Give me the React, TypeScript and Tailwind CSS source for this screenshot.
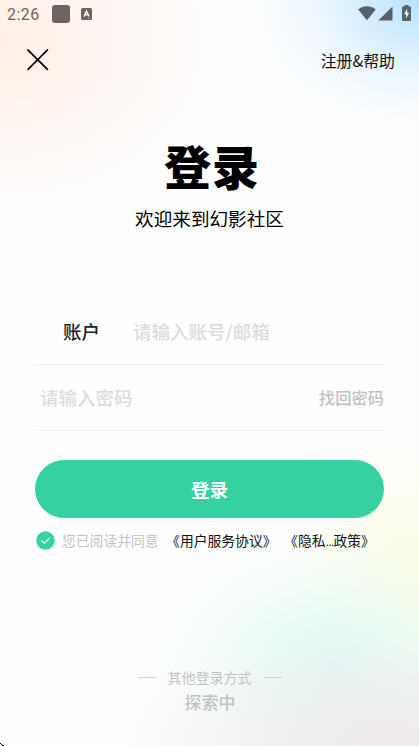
const StatusBar = () => {
  return (
    <div className="flex h-7 items-center justify-between pl-[7px] pr-[8px]">
      <div className="flex items-center text-[#6b6461]">
        <span className="w-[45px] pt-px font-[Roboto] text-[16px] leading-7 tracking-[0.5px]">2:26</span>
        <span className="h-[18px] w-[18px] rounded-[3px] bg-[#6b6461]" />
        <svg className="ml-[11px]" width="11" height="12" viewBox="0 0 11 12">
          <rect width="11" height="12" rx="1.5" fill="#6b6461" />
          <path d="M3 8.5 L5.5 3 L8 8.5 M4 6.8 H7" fill="none" stroke="#fff6f0" strokeWidth="1.4" />
          <path d="M6.5 10.5 H9" stroke="#b5aeaa" strokeWidth="0.8" />
        </svg>
      </div>
      <div className="-mt-[2px] flex items-center text-[#56626a]">
        <svg width="18" height="15" viewBox="0 0 18 15" fill="currentColor">
          <path d="M0.2 3.4 C5.4 -0.9 12.6 -0.9 17.8 3.4 L9 14.3 Z" />
        </svg>
        <svg className="ml-[2px] mt-px" width="15" height="15" viewBox="0 0 15 15" fill="currentColor">
          <path d="M0.3 14.6 L14.5 0.4 V14.6 Z" />
        </svg>
        <svg className="ml-[9px]" width="9" height="16" viewBox="0 0 9 16">
          <path
            d="M2.4 0 H6.6 V1.5 H8 C8.6 1.5 9 1.9 9 2.5 V15 C9 15.6 8.6 16 8 16 H1 C0.4 16 0 15.6 0 15 V2.5 C0 1.9 0.4 1.5 1 1.5 H2.4 Z"
            fill="currentColor"
          />
          <path d="M5.2 3.8 L2 9.3 H4.1 V13.4 L7.2 7.8 H5.2 Z" fill="#e6f5ff" />
        </svg>
      </div>
    </div>
  );
};

const LoginForm = () => {
  return (
    <div className="px-[35px]">
      {/* Account */}
      <div className="flex h-[66px] items-center border-b border-[#efefef] text-[18.5px]">
        <label className="ml-[28px] w-[70px] font-medium text-[#222]">账户</label>
        <span className="font-medium text-[#dcdcdc]">请输入账号/邮箱</span>
      </div>

      {/* Password */}
      <div className="flex h-[66px] items-center justify-between border-b border-[#efefef]">
        <span className="ml-[5px] text-[18.5px] font-medium text-[#dcdcdc]">请输入密码</span>
        <span className="text-[16.3px] font-medium text-[#c2c2c2]">找回密码</span>
      </div>

      <button className="mt-[29px] block h-[58px] w-full rounded-full bg-[#36d1a3] pt-px text-[18.5px] font-bold text-white">
        登录
      </button>

      {/* Agreement */}
      <div className="mt-[8px] flex h-7 items-center whitespace-nowrap text-[13.8px] [font-feature-settings:'halt']">
        <svg className="ml-[1px] shrink-0" width="19" height="19" viewBox="0 0 19 19">
          <circle cx="9.5" cy="9.5" r="9.3" fill="#36d1a3" />
          <path d="M5.3 9.4 L8.4 12.3 L13.8 6.9" fill="none" stroke="#fff" strokeWidth="1.1" />
        </svg>
        <span className="ml-[7px] w-[111px] text-[#c4c4c4]">您已阅读并同意</span>
        <span className="w-[118px] text-[#111]">《用户服务协议》</span>
        <span className="text-[#111]">
          《隐私<span className="font-light tracking-[-0.8px]">...</span>政策》
        </span>
      </div>
    </div>
  );
};

export default function App() {
  return (
    <main className="relative flex h-[746px] w-[419px] flex-col overflow-hidden bg-[#fefefe] bg-[radial-gradient(ellipse_260px_200px_at_0px_40px,#fff0e6_0%,#fff0e6cc_25%,#fff2ed66_58%,#fff5f21f_82%,#fff5f200_100%),radial-gradient(ellipse_185px_140px_at_419px_0px,#b9e2ff_0%,#bfe5ffb0_28%,#c8e9ff52_55%,#d0ecff1a_80%,#d0ecff00_100%),radial-gradient(ellipse_310px_125px_at_400px_746px,#f0eaee_0%,#efebeed9_30%,#f2edf070_62%,#f8f2f526_84%,#f8f2f500_100%),radial-gradient(ellipse_210px_155px_at_335px_672px,#dcf8f3_0%,#def9f4c4_28%,#e3fbf85c_58%,#e8fcfa1a_82%,#e8fcfa00_100%),radial-gradient(ellipse_170px_180px_at_419px_590px,#fbfde4_0%,#fcfde6cc_30%,#fdfee966_60%,#fefeee1f_82%,#fefeee00_100%)] font-['Noto_Sans_CJK_SC',sans-serif]">
      <StatusBar />

      <header className="flex h-16 items-center justify-between pl-[27px] pr-[24px]">
        <svg className="-mt-px" width="22" height="22" viewBox="0 0 22 22" fill="none" stroke="#000" strokeWidth="1.7">
          <path d="M0.5 0.5 L20.9 20.9 M20.9 0.5 L0.5 20.9" />
        </svg>
        <span className="pt-[2px] text-[15.9px] text-[#111]">注册&amp;帮助</span>
      </header>

      <div className="mt-[43px] flex flex-col items-center text-black">
        <h1 className="ml-[5px] text-[47px] font-black leading-[60px] tracking-[1px]">登录</h1>
        <p className="mt-[9px] text-[18.6px] leading-7">欢迎来到幻影社区</p>
      </div>

      <div className="mt-[67px]">
        <LoginForm />
      </div>

      <footer className="mt-[111px] flex flex-col items-center text-[#c2c2c2]">
        <div className="flex items-center gap-3 text-[14px] leading-6">
          <span className="h-px w-[18px] bg-[#d0d3d2]" />
          其他登录方式
          <span className="h-px w-[18px] bg-[#d0d3d2]" />
        </div>
        <p className="ml-px mt-px text-[17px] font-medium leading-6">探索中</p>
      </footer>

      {/* Corner edge of the screen */}
      <svg className="absolute bottom-0 left-0" width="4" height="4" viewBox="0 0 4 4">
        <path d="M0 1 H1 V2 H2 V3 H4 V4 H2 V3 H1 V2 H0 Z" fill="#000" />
      </svg>
    </main>
  );
}
